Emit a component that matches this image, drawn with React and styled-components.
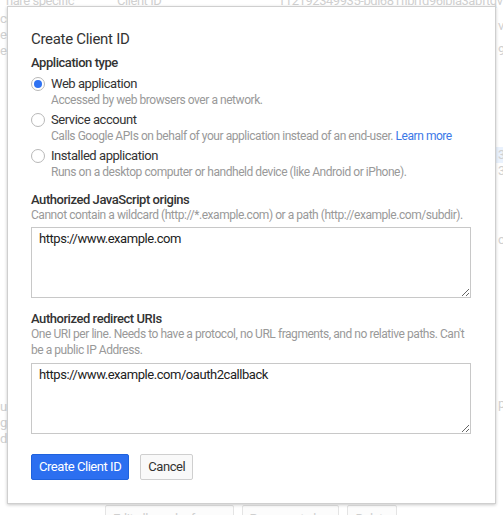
import React from "react";
import styled, { createGlobalStyle } from "styled-components";

const Global = createGlobalStyle`
  html, body { margin: 0; padding: 0; background: #fff; }
  body { font-family: Roboto, "Liberation Sans", Arial, sans-serif; overflow: hidden; }
  * { box-sizing: border-box; }
`;

const FONT = `Roboto, "Liberation Sans", Arial, sans-serif`;

const Page = styled.div`
  position: relative;
  width: 503px;
  height: 515px;
  overflow: hidden;
  background: #fff;
  font-family: ${FONT};
  font-size: 13px;
  letter-spacing: -0.45px;
  color: #d0d0d0;
`;

const TopRow = styled.div`
  display: grid;
  grid-template-columns: 111px 161px 1fr;
  padding-left: 6px;
  margin-top: -7px;
  height: 16px;
  line-height: 16px;
  white-space: nowrap;
  overflow: hidden;
`;

const BackBody = styled.div`
  display: grid;
  grid-template-columns: 7px 1fr 7px;
  height: 496px;
`;

const Strip = styled.div`
  display: flex;
  flex-direction: column;
  overflow: hidden;
  white-space: nowrap;
  padding-left: ${(p) => p.$pad || 0}px;
`;

const Line = styled.div`
  height: 16px;
  line-height: 16px;
  margin-top: ${(p) => p.$gap || 0}px;
  background: ${(p) => (p.$hl ? "#eaf2fd" : "transparent")};
  margin-left: ${(p) => (p.$hl ? -2 : 0)}px;
  padding-left: ${(p) => (p.$hl ? 2 : 0)}px;
`;

const BottomActions = styled.div`
  display: flex;
  gap: 8px;
  padding-left: 105px;
`;

const GhostButton = styled.div`
  height: 28px;
  padding: 0 7px;
  border: 1px solid #e4e4e4;
  border-radius: 2px;
  background: #fcfcfc;
  color: #cfcfcf;
  font-size: 13px;
  line-height: 26px;
  white-space: nowrap;
`;

const Modal = styled.div`
  position: absolute;
  left: 7px;
  top: 6px;
  width: 489px;
  background: #fff;
  border: 1px solid #cfcfcf;
  box-shadow: 0 1px 3px rgba(0, 0, 0, 0.22);
  padding: 22px 24px 23px 23px;
  display: flex;
  flex-direction: column;
  font-family: ${FONT};
  letter-spacing: -0.45px;
`;

const Title = styled.h2`
  margin: 0;
  font-size: 15px;
  line-height: 20px;
  font-weight: 400;
  letter-spacing: -0.3px;
  color: #333;
`;

const SectionLabel = styled.div`
  margin-top: ${(p) => p.$gap}px;
  font-size: 13px;
  line-height: 14px;
  font-weight: 500;
  color: #333;
`;

const Help = styled.div`
  font-size: 12px;
  line-height: 16px;
  color: #999;
`;

const Options = styled.div`
  margin-top: 6px;
  display: flex;
  flex-direction: column;
  gap: 4px;
`;

const Option = styled.label`
  display: grid;
  grid-template-columns: 14px 1fr;
  column-gap: 6px;
  align-items: center;
`;

const Radio = styled.span`
  width: 14px;
  height: 14px;
  border-radius: 50%;
  border: 1px solid #b8b8b8;
  background: #fff;
  display: flex;
  align-items: center;
  justify-content: center;
  &::after {
    content: "";
    width: 8px;
    height: 8px;
    border-radius: 50%;
    background: ${(p) => (p.$checked ? "#2f72f2" : "transparent")};
  }
`;

const OptionName = styled.div`
  font-size: 13px;
  line-height: 16px;
  color: #333;
`;

const OptionHelp = styled(Help)`
  grid-column: 2;
`;

const Link = styled.a`
  color: #3b78e7;
  text-decoration: none;
`;

const Field = styled.textarea`
  display: block;
  margin-top: ${(p) => p.$gap}px;
  width: 100%;
  height: 71px;
  padding: 3px 7px;
  border: 1px solid #c8c8c8;
  border-radius: 0;
  font-family: ${FONT};
  font-size: 13px;
  line-height: 16px;
  letter-spacing: -0.45px;
  color: #222;
  background: #fff;
  outline: none;
`;

const Actions = styled.div`
  margin-top: 20px;
  display: flex;
  gap: 11px;
`;

const Button = styled.button`
  height: 26px;
  padding: 0 7px;
  border-radius: 2px;
  font-family: ${FONT};
  font-size: 13px;
  line-height: 24px;
  letter-spacing: -0.45px;
  cursor: pointer;
  border: 1px solid ${(p) => (p.$primary ? "#1f62dd" : "#cfcfcf")};
  background: ${(p) => (p.$primary ? "#2c6ff0" : "#f9f9f9")};
  color: ${(p) => (p.$primary ? "#fff" : "#333")};
`;

const options = [
  {
    name: "Web application",
    help: "Accessed by web browsers over a network.",
    checked: true,
  },
  {
    name: "Service account",
    help: "Calls Google APIs on behalf of your application instead of an end-user.",
    link: "Learn more",
  },
  {
    name: "Installed application",
    help: "Runs on a desktop computer or handheld device (like Android or iPhone).",
  },
];

export default function App() {
  return (
    <>
      <Global />
      <Page>
        <TopRow>
          <span>nare specific</span>
          <span>Client ID</span>
          <span>112192349935-bdl681flbrfd96lbla3abftqv</span>
        </TopRow>
        <BackBody>
          <Strip>
            <Line $gap={2}>credentials</Line>
            <Line>e</Line>
            <Line>e</Line>
            <Line $gap={340}>u</Line>
            <Line>g</Line>
            <Line>d</Line>
          </Strip>
          <div />
          <Strip $pad={2}>
            <Line $gap={9}>v</Line>
            <Line $gap={9}>91</Line>
            <Line $gap={88} $hl>3</Line>
            <Line>3</Line>
            <Line $gap={53}>ca</Line>
            <Line $gap={148}>pj</Line>
          </Strip>
        </BackBody>
        <BottomActions>
          <GhostButton>Edit allowed referrers</GhostButton>
          <GhostButton>Regenerate key</GhostButton>
          <GhostButton>Delete</GhostButton>
        </BottomActions>

        <Modal>
          <Title>Create Client ID</Title>
          <SectionLabel $gap={7}>Application type</SectionLabel>
          <Options>
            {options.map((o) => (
              <Option key={o.name}>
                <Radio $checked={o.checked} />
                <OptionName>{o.name}</OptionName>
                <OptionHelp>
                  {o.help}
                  {o.link && (
                    <>
                      {" "}
                      <Link href="#">{o.link}</Link>
                    </>
                  )}
                </OptionHelp>
              </Option>
            ))}
          </Options>

          <SectionLabel $gap={13}>Authorized JavaScript origins</SectionLabel>
          <Help>
            Cannot contain a wildcard (http://*.example.com) or a path
            (http://example.com/subdir).
          </Help>
          <Field $gap={4} defaultValue="https://www.example.com" />

          <SectionLabel $gap={14}>Authorized redirect URIs</SectionLabel>
          <Help>
            One URI per line. Needs to have a protocol, no URL fragments, and no
            relative paths. Can't be a public IP Address.
          </Help>
          <Field $gap={5} defaultValue="https://www.example.com/oauth2callback" />

          <Actions>
            <Button $primary>Create Client ID</Button>
            <Button>Cancel</Button>
          </Actions>
        </Modal>
      </Page>
    </>
  );
}
